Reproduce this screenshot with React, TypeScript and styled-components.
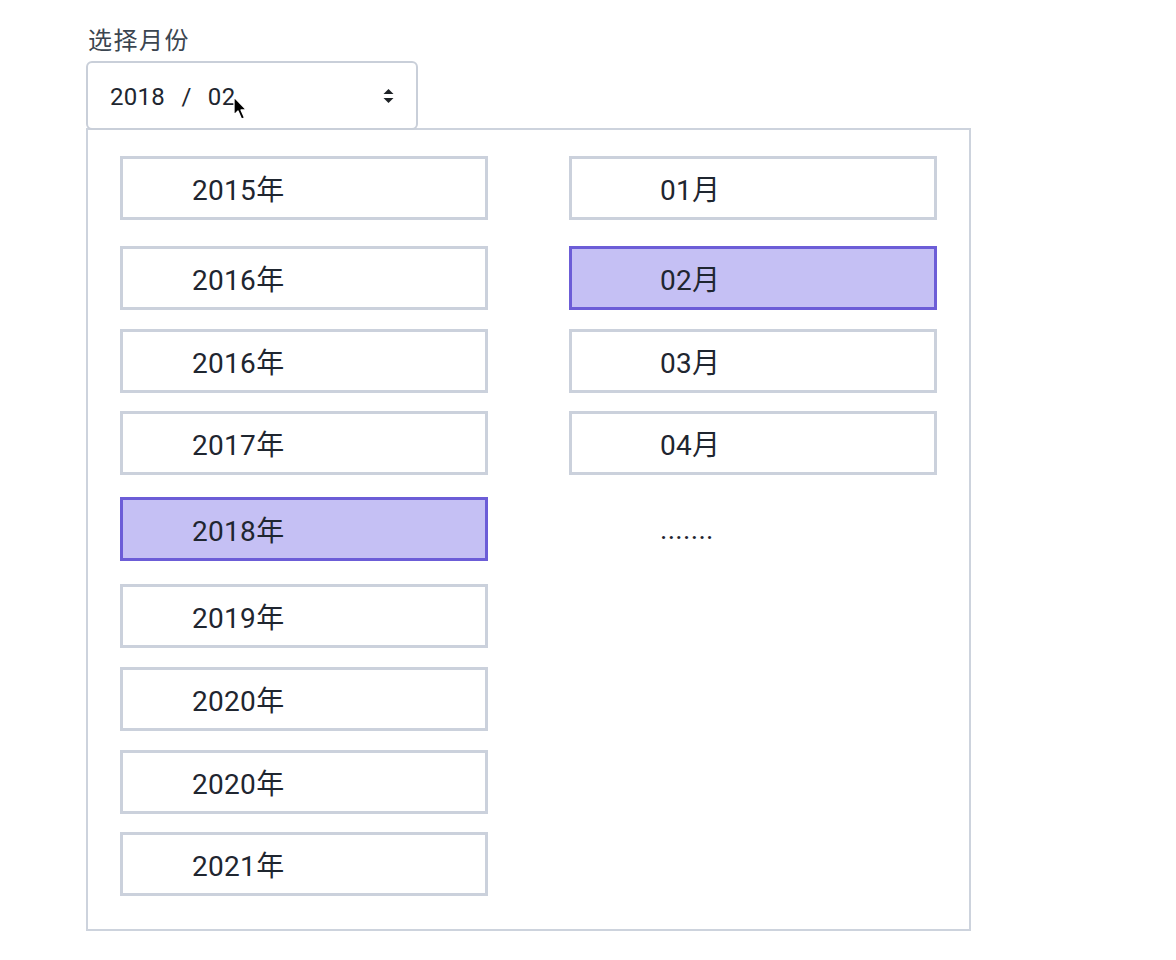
import React from "react";
import styled, { createGlobalStyle } from "styled-components";

const GlobalStyle = createGlobalStyle`
  html, body { margin: 0; padding: 0; background: #ffffff; }
  body { font-family: Roboto, "Noto Sans CJK SC", sans-serif; }
`;

const Page = styled.div`
  padding: 26px 0 0 86px;
  display: flex;
  flex-direction: column;
  align-items: flex-start;
`;

const Label = styled.div`
  font-family: Roboto, "Noto Sans CJK SC", sans-serif;
  font-size: 24px;
  line-height: 30px;
  color: #3b4550;
  margin: 0 0 5px 2px;
  letter-spacing: 1.5px;
`;

const SelectBox = styled.div`
  position: relative;
  z-index: 1;
  box-sizing: border-box;
  width: 332px;
  height: 69px;
  margin-bottom: -2px;
  border: 2px solid #c9cfd9;
  border-radius: 6px;
  background: #ffffff;
  display: flex;
  align-items: center;
  justify-content: space-between;
  padding: 0 22px 0 22px;
  font-family: Roboto, "Noto Sans CJK SC", sans-serif;
  font-size: 24px;
  color: #1e2630;
  word-spacing: 10px;
  letter-spacing: 0.3px;
`;

const SelectValue = styled.span`
  padding-top: 2px;
`;

const Cursor = styled.svg`
  position: absolute;
  left: 145px;
  top: 33px;
`;

const Panel = styled.div`
  box-sizing: border-box;
  width: 885px;
  border: 2px solid #cdd3dd;
  padding: 26px 33px 33px 32px;
  display: grid;
  grid-template-columns: 368px 368px;
  column-gap: 81px;
  align-items: start;
`;

const Column = styled.div`
  display: flex;
  flex-direction: column;
`;

const Option = styled.div<{ $selected?: boolean; $pad: number; $gap: number; $plain?: boolean }>`
  box-sizing: border-box;
  height: 64px;
  margin-top: ${(p) => p.$gap}px;
  padding-left: ${(p) => p.$pad}px;
  display: flex;
  align-items: center;
  border: 3px solid
    ${(p) => (p.$plain ? "transparent" : p.$selected ? "#6c5dd7" : "#cbd1dc")};
  background: ${(p) => (p.$selected ? "#c5c0f4" : "transparent")};
  font-family: Roboto, "Noto Sans CJK SC", sans-serif;
  font-size: 28px;
  color: #1f2630;
  letter-spacing: 0.3px;
`;

const years = [
  { label: "2015年", gap: 0 },
  { label: "2016年", gap: 26 },
  { label: "2016年", gap: 19 },
  { label: "2017年", gap: 18 },
  { label: "2018年", gap: 22, selected: true },
  { label: "2019年", gap: 23 },
  { label: "2020年", gap: 19 },
  { label: "2020年", gap: 19 },
  { label: "2021年", gap: 18 },
];

const months = [
  { label: "01月", gap: 0 },
  { label: "02月", gap: 26, selected: true },
  { label: "03月", gap: 19 },
  { label: "04月", gap: 18 },
];

export default function App() {
  return (
    <>
      <GlobalStyle />
      <Page>
        <Label>选择月份</Label>
        <SelectBox>
          <SelectValue>2018 / 02</SelectValue>
          <svg width="11" height="16" viewBox="0 0 11 16">
            <path d="M0.5 6 L5.5 1 L10.5 6 Z" fill="#1e2226" />
            <path d="M0.5 10 L5.5 15 L10.5 10 Z" fill="#1e2226" />
          </svg>
          <Cursor width="16" height="26" viewBox="0 0 16 26">
            <path
              d="M1 1 L1 19 L5 15 L8.5 23 L11.5 21.8 L8 14 L13.5 14 Z"
              fill="#000"
              stroke="#fff"
              strokeWidth="1.3"
              strokeLinejoin="round"
            />
          </Cursor>
        </SelectBox>
        <Panel>
          <Column>
            {years.map((y, i) => (
              <Option key={i} $pad={69} $gap={y.gap} $selected={y.selected}>
                {y.label}
              </Option>
            ))}
          </Column>
          <Column>
            {months.map((m, i) => (
              <Option key={i} $pad={88} $gap={m.gap} $selected={m.selected}>
                {m.label}
              </Option>
            ))}
            <Option $pad={88} $gap={22} $plain>
              .......
            </Option>
          </Column>
        </Panel>
      </Page>
    </>
  );
}
